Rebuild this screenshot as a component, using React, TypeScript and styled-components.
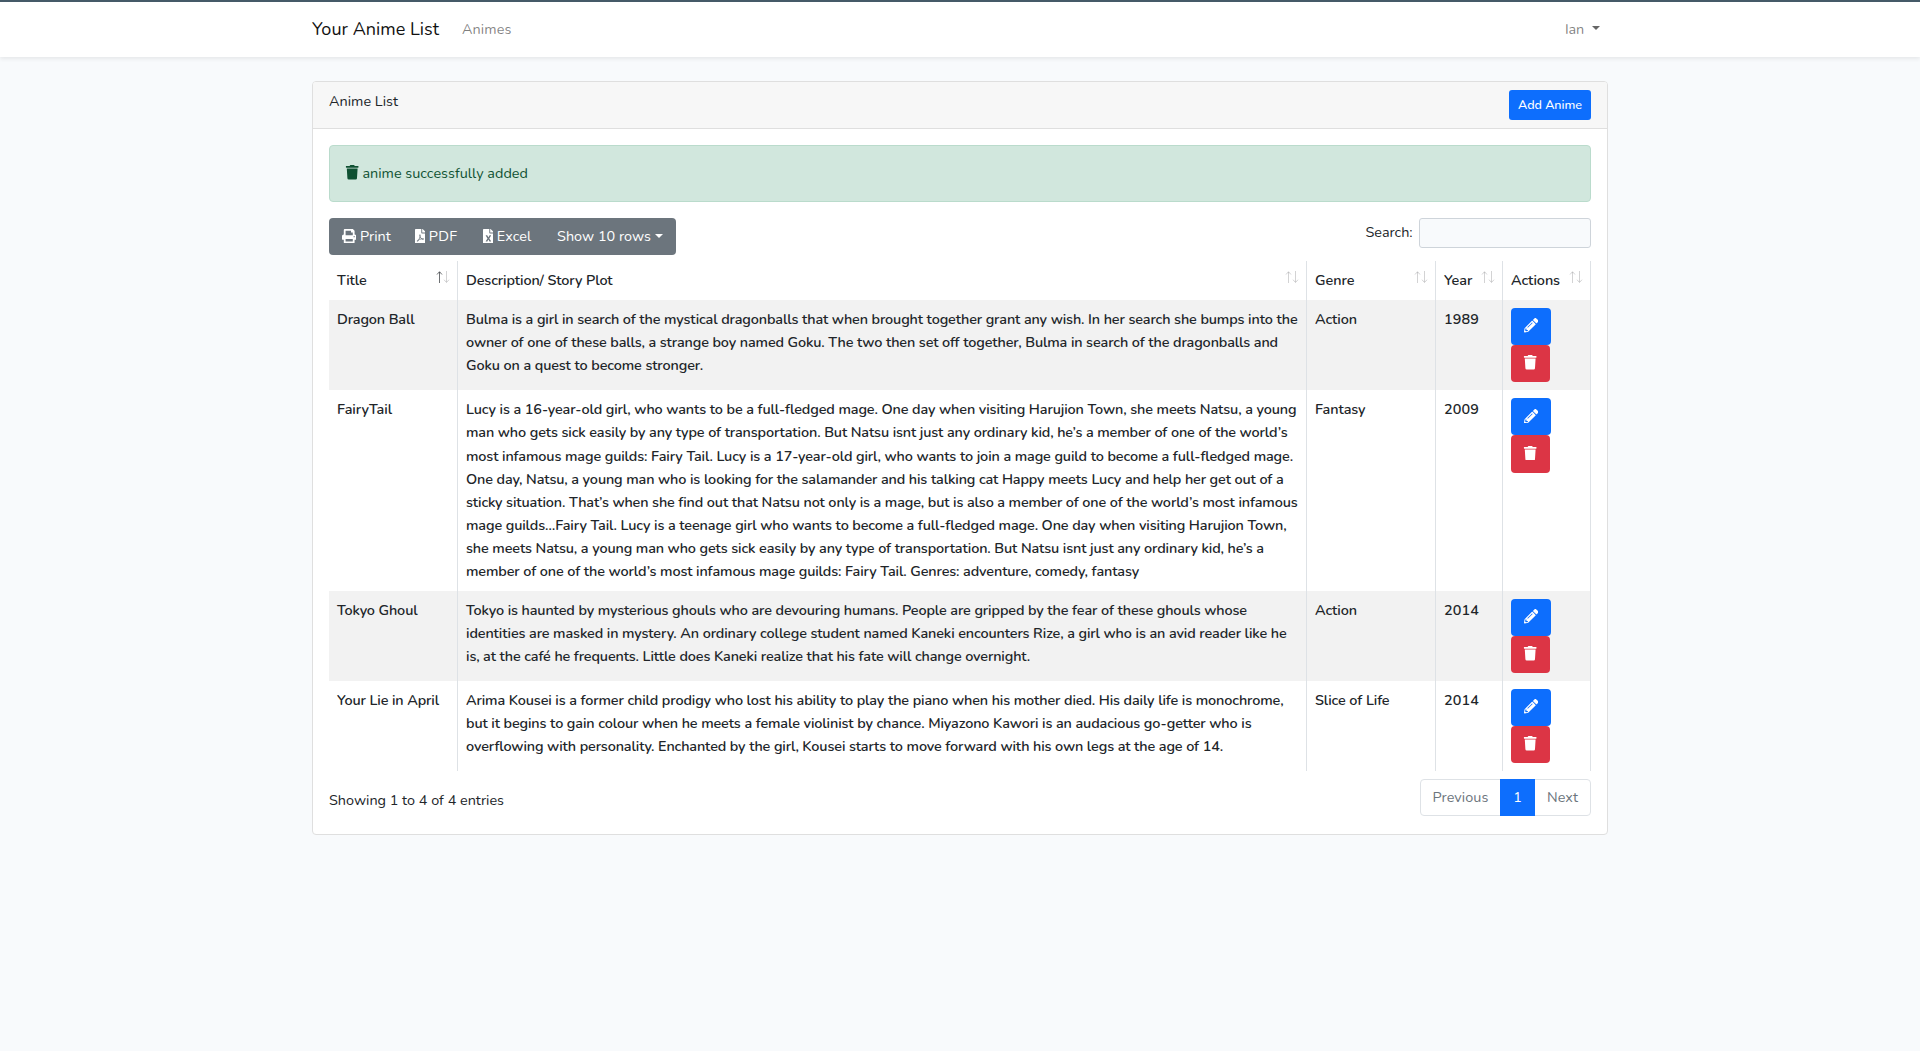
import React, { useLayoutEffect, useRef, useState } from 'react';
import styled, { createGlobalStyle, css } from 'styled-components';
import { FaTrash, FaPrint, FaFilePdf, FaFileExcel, FaPencilAlt } from 'react-icons/fa';

const GlobalStyle = createGlobalStyle`
  *, *::before, *::after { box-sizing: border-box; }
  body {
    margin: 0;
    min-height: 100vh;
    background: #f8fafc;
    color: #212529;
    font-family: Nunito, Lato, 'Open Sans', sans-serif;
    font-size: 14.4px;
    font-weight: 380;
    line-height: 23.04px;
  }
`;

const Fitted = styled.span`
  display: inline-block;
  white-space: nowrap;
`;

/* One line of text, tracked so that it spans the given measure. */
function Fit({ w, children }: { w: number; children: string }) {
  const ref = useRef<HTMLSpanElement>(null);
  const [tracking, setTracking] = useState(0);
  useLayoutEffect(() => {
    if (ref.current) {
      const natural = ref.current.getBoundingClientRect().width;
      setTracking((w - natural) / children.length);
    }
  }, []);
  return (
    <Fitted ref={ref} style={{ letterSpacing: `${tracking}px` }}>
      {children}
    </Fitted>
  );
}

const Navbar = styled.nav`
  height: 57px;
  border-top: 2px solid #455a68;
  background: #fff;
  box-shadow: 0 2px 4px rgba(0, 0, 0, 0.075);
`;

const Container = styled.div`
  width: 1296px;
  margin: 0 auto;
`;

const NavInner = styled(Container)`
  display: flex;
  align-items: center;
  height: 55px;
`;

const Brand = styled.a`
  font-size: 18px;
  color: #111;
  margin-right: 23px;
`;

const NavLink = styled.a`
  display: flex;
  align-items: center;
  color: rgba(0, 0, 0, 0.5);
`;

const UserMenu = styled(NavLink)`
  margin-left: auto;
  padding-right: 8px;
`;

const Caret = styled.span<{ $gap: number; $up?: number }>`
  display: inline-block;
  margin-left: ${(p) => p.$gap}px;
  margin-bottom: ${(p) => p.$up ?? 0}px;
  border: 4.5px solid transparent;
  border-top-color: currentColor;
  border-bottom: 0;
`;

const UserCaret = styled(Caret)`
  color: rgba(0, 0, 0, 0.6);
`;

const Main = styled.main`
  padding: 24px 0;
`;

const Card = styled.section`
  height: 754px;
  border: 1px solid #dfdfdf;
  border-radius: 4px;
  background: #fff;
  overflow: hidden;
`;

const CardHeader = styled.header`
  display: flex;
  justify-content: space-between;
  height: 47px;
  padding: 8px 16px;
  background: #f7f7f7;
  border-bottom: 1px solid #dfdfdf;
`;

const AddButton = styled.button`
  height: 30px;
  width: 82px;
  padding: 0;
  border: 0;
  border-radius: 3px;
  background: #0d6efd;
  color: #fff;
  font: 550 12.6px/30px Nunito, Lato, sans-serif;
`;

const CardBody = styled.div`
  padding: 16px;
`;

const Alert = styled.div`
  display: flex;
  align-items: center;
  height: 57px;
  padding: 0 16px;
  border: 1px solid #badbcc;
  border-radius: 4px;
  background: #d1e7dd;
  color: #0f5132;
  svg { margin: 0 3px 2px -1px; }
`;

const Toolbar = styled.div`
  display: flex;
  justify-content: space-between;
  align-items: flex-start;
  margin: 16px 0 6px;
`;

const ButtonGroup = styled.div`
  display: flex;
  height: 37px;
  padding-left: 1px;
  border-radius: 4px;
  background: #6c757d;
`;

const ToolButton = styled.button<{ $w: number }>`
  display: flex;
  align-items: center;
  width: ${(p) => p.$w}px;
  padding: 0 0 0 12px;
  border: 0;
  background: none;
  color: #fff;
  font: inherit;
  font-weight: 450;
  svg { margin-right: 3.5px; margin-bottom: 1px; flex: none; }
`;

const FileButton = styled(ToolButton)`
  svg { width: 10.8px; }
`;

const SearchLabel = styled.label`
  display: flex;
  align-items: center;
  gap: 6.5px;
`;

const SearchInput = styled.input`
  width: 172px;
  height: 30px;
  border: 1px solid #ced4da;
  border-radius: 3px;
  background: #f8fafc;
`;

const cols = css`
  display: grid;
  grid-template-columns: 129px 849px 129px 67px 88px;
`;

const HeadRow = styled.div`
  ${cols}
  height: 39px;
  font-weight: 600;
`;

const Row = styled.div<{ $h: number; $striped: boolean }>`
  ${cols}
  height: ${(p) => p.$h}px;
  background: ${(p) => (p.$striped ? '#f2f2f2' : '#fff')};
  font-weight: 600;
`;

const Cell = styled.div`
  padding: 8px 0 8px 8px;
  border-right: 1px solid #dee2e6;
`;

const HeadCell = styled(Cell)`
  display: flex;
  justify-content: space-between;
  padding-right: 7.5px;
`;

const TextLine = styled.div`
  height: 23.04px;
`;

const SortArrows = styled.svg`
  width: 14px;
  height: 14px;
  margin-top: 1px;
  fill: none;
  stroke: #212529;
`;

const ActionButton = styled.button<{ $tone: 'edit' | 'remove' }>`
  display: flex;
  align-items: center;
  justify-content: center;
  width: ${(p) => (p.$tone === 'edit' ? 40 : 39)}px;
  height: 37.04px;
  padding: 0 0 2px;
  border: 0;
  border-radius: 4px;
  background: ${(p) => (p.$tone === 'edit' ? '#0d6efd' : '#dc3545')};
  color: #fff;
`;

const Footer = styled.footer`
  display: flex;
  justify-content: space-between;
  padding-top: 8px;
`;

const Info = styled.div`
  padding-top: 10px;
`;

const Pagination = styled.div`
  display: flex;
  height: 37px;
  border: 1px solid #dee2e6;
  border-radius: 4px;
`;

const PageItem = styled.a<{ $w: number; $active?: boolean }>`
  display: flex;
  align-items: center;
  justify-content: center;
  width: ${(p) => p.$w}px;
  margin: ${(p) => (p.$active ? '-1px 0' : '0')};
  background: ${(p) => (p.$active ? '#0d6efd' : 'transparent')};
  color: ${(p) => (p.$active ? '#fff' : '#6c757d')};
`;

type Measured = [text: string, width: number];

interface Anime {
  title: Measured;
  plot: Measured[];
  genre: Measured;
  year: string;
  height: number;
}

const columns: Measured[] = [
  ['Title', 29.5],
  ['Description/ Story Plot', 146.5],
  ['Genre', 39.5],
  ['Year', 28.5],
  ['Actions', 49],
];

const animes: Anime[] = [
  {
    title: ['Dragon Ball', 77.5],
    plot: [
      ['Bulma is a girl in search of the mystical dragonballs that when brought together grant any wish. In her search she bumps into the', 831.5],
      ['owner of one of these balls, a strange boy named Goku. The two then set off together, Bulma in search of the dragonballs and', 812],
      ['Goku on a quest to become stronger.', 237],
    ],
    genre: ['Action', 42],
    year: '1989',
    height: 90.44,
  },
  {
    title: ['FairyTail', 55],
    plot: [
      ['Lucy is a 16-year-old girl, who wants to be a full-fledged mage. One day when visiting Harujion Town, she meets Natsu, a young', 830.5],
      ['man who gets sick easily by any type of transportation. But Natsu isnt just any ordinary kid, he’s a member of one of the world’s', 821.5],
      ['most infamous mage guilds: Fairy Tail. Lucy is a 17-year-old girl, who wants to join a mage guild to become a full-fledged mage.', 827],
      ['One day, Natsu, a young man who is looking for the salamander and his talking cat Happy meets Lucy and help her get out of a', 817.5],
      ['sticky situation. That’s when she find out that Natsu not only is a mage, but is also a member of one of the world’s most infamous', 831.5],
      ['mage guilds…Fairy Tail. Lucy is a teenage girl who wants to become a full-fledged mage. One day when visiting Harujion Town,', 820.5],
      ['she meets Natsu, a young man who gets sick easily by any type of transportation. But Natsu isnt just any ordinary kid, he’s a', 798],
      ['member of one of the world’s most infamous mage guilds: Fairy Tail. Genres: adventure, comedy, fantasy', 673],
    ],
    genre: ['Fantasy', 50.5],
    year: '2009',
    height: 200.56,
  },
  {
    title: ['Tokyo Ghoul', 80.5],
    plot: [
      ['Tokyo is haunted by mysterious ghouls who are devouring humans. People are gripped by the fear of these ghouls whose', 781],
      ['identities are masked in mystery. An ordinary college student named Kaneki encounters Rize, a girl who is an avid reader like he', 820.5],
      ['is, at the café he frequents. Little does Kaneki realize that his fate will change overnight.', 564],
    ],
    genre: ['Action', 42],
    year: '2014',
    height: 90,
  },
  {
    title: ['Your Lie in April', 102],
    plot: [
      ['Arima Kousei is a former child prodigy who lost his ability to play the piano when his mother died. His daily life is monochrome,', 817.5],
      ['but it begins to gain colour when he meets a female violinist by chance. Miyazono Kawori is an audacious go-getter who is', 785.5],
      ['overflowing with personality. Enchanted by the girl, Kousei starts to move forward with his own legs at the age of 14.', 757],
    ],
    genre: ['Slice of Life', 74.5],
    year: '2014',
    height: 90,
  },
];

const Arrows = ({ ascending }: { ascending: boolean }) => (
  <SortArrows viewBox="0 0 14 14">
    <path d="M3.5 13V2M1 4.5 3.5 1.7 6 4.5" opacity={ascending ? 0.65 : 0.2} />
    <path d="M10.5 1v11M8 9.7l2.5 2.8L13 9.7" opacity={0.2} />
  </SortArrows>
);

export default function App() {
  return (
    <>
      <GlobalStyle />
      <Navbar>
        <NavInner>
          <Brand><Fit w={127}>Your Anime List</Fit></Brand>
          <NavLink><Fit w={49.5}>Animes</Fit></NavLink>
          <UserMenu><Fit w={19}>Ian</Fit><UserCaret $gap={8} $up={2} /></UserMenu>
        </NavInner>
      </Navbar>
      <Main>
        <Container>
          <Card>
            <CardHeader>
              <Fit w={69}>Anime List</Fit>
              <AddButton><Fit w={64}>Add Anime</Fit></AddButton>
            </CardHeader>
            <CardBody>
              <Alert>
                <FaTrash size={14.4} />
                <Fit w={165.5}>anime successfully added</Fit>
              </Alert>
              <Toolbar>
                <ButtonGroup>
                  <ToolButton $w={72.5}><FaPrint size={14.4} /><Fit w={31}>Print</Fit></ToolButton>
                  <FileButton $w={68}><FaFilePdf size={14.4} /><Fit w={28.5}>PDF</Fit></FileButton>
                  <FileButton $w={74.5}><FaFileExcel size={14.4} /><Fit w={34.5}>Excel</Fit></FileButton>
                  <ToolButton $w={131}><Fit w={94}>Show 10 rows</Fit><Caret $gap={3.5} $up={2} /></ToolButton>
                </ButtonGroup>
                <SearchLabel><Fit w={47}>Search:</Fit><SearchInput /></SearchLabel>
              </Toolbar>
              <HeadRow>
                {columns.map(([text, w], i) => (
                  <HeadCell key={text}>
                    <Fit w={w}>{text}</Fit>
                    <Arrows ascending={i === 0} />
                  </HeadCell>
                ))}
              </HeadRow>
              {animes.map((a, i) => (
                <Row key={a.title[0]} $h={a.height} $striped={i % 2 === 0}>
                  <Cell><Fit w={a.title[1]}>{a.title[0]}</Fit></Cell>
                  <Cell>
                    {a.plot.map(([text, w]) => (
                      <TextLine key={text}><Fit w={w}>{text}</Fit></TextLine>
                    ))}
                  </Cell>
                  <Cell><Fit w={a.genre[1]}>{a.genre[0]}</Fit></Cell>
                  <Cell><Fit w={35}>{a.year}</Fit></Cell>
                  <Cell>
                    <ActionButton $tone="edit" aria-label="Edit"><FaPencilAlt size={14.4} /></ActionButton>
                    <ActionButton $tone="remove" aria-label="Delete"><FaTrash size={14.4} /></ActionButton>
                  </Cell>
                </Row>
              ))}
              <Footer>
                <Info><Fit w={175}>Showing 1 to 4 of 4 entries</Fit></Info>
                <Pagination>
                  <PageItem $w={79}><Fit w={56}>Previous</Fit></PageItem>
                  <PageItem $w={35} $active>1</PageItem>
                  <PageItem $w={55}><Fit w={31}>Next</Fit></PageItem>
                </Pagination>
              </Footer>
            </CardBody>
          </Card>
        </Container>
      </Main>
    </>
  );
}
